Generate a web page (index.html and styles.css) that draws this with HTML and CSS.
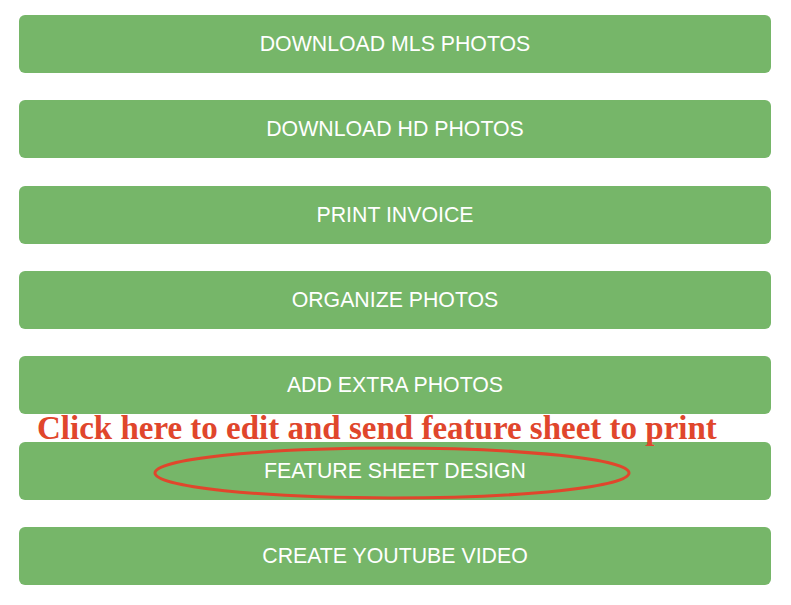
FILE: index.html
```html
<!DOCTYPE html>
<html>
<head>
    <title>Order Actions</title>
    <link rel="stylesheet" href="styles.css">
</head>
<body>
    <div class="actions">
        <button class="action-btn">DOWNLOAD MLS PHOTOS</button>
        <button class="action-btn">DOWNLOAD HD PHOTOS</button>
        <button class="action-btn">PRINT INVOICE</button>
        <button class="action-btn">ORGANIZE PHOTOS</button>
        <button class="action-btn">ADD EXTRA PHOTOS</button>
        <div class="highlight">
            <div class="note">Click here to edit and send feature sheet to print</div>
            <button class="action-btn">FEATURE SHEET DESIGN</button>
            <svg class="circle" width="480" height="56" viewBox="0 0 480 56">
                <ellipse cx="240" cy="28" rx="237" ry="25" fill="none" stroke="#e0462c" stroke-width="3"/>
            </svg>
        </div>
        <button class="action-btn">CREATE YOUTUBE VIDEO</button>
    </div>
</body>
</html>
```

FILE: styles.css
```css
body {
    margin: 0;
    padding: 0;
    background: #fff;
    font-family: "Liberation Sans", Arial, sans-serif;
}
.actions {
    display: flex;
    flex-direction: column;
    gap: 27.33px;
    padding: 15px 20px 0 19px;
}
.action-btn {
    display: block;
    width: 100%;
    height: 58px;
    background: #76b669;
    color: #fff;
    border: none;
    border-radius: 6px;
    font-family: "Liberation Sans", Arial, sans-serif;
    font-size: 21.3px;
    padding: 1px 0 0;
    cursor: pointer;
}
.highlight {
    position: relative;
}
.note {
    position: absolute;
    left: 18px;
    top: -32px;
    font-family: "Liberation Serif", "Times New Roman", serif;
    font-weight: bold;
    font-size: 33px;
    line-height: 36px;
    color: #e0462c;
    white-space: nowrap;
}
.circle {
    position: absolute;
    left: 133px;
    top: 3px;
    pointer-events: none;
}
```
